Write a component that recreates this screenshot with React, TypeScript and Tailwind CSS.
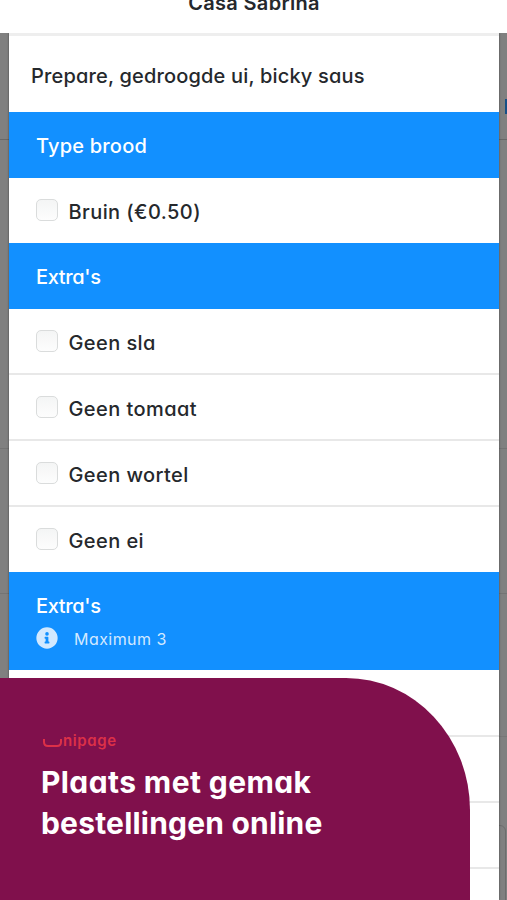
import type { ReactNode } from "react";

const SOFT = "[font-family:Inter,Lato,sans-serif] [font-feature-settings:'cv11']";

function SectionHeader({
  title,
  tracking,
  children,
}: {
  title: string;
  tracking: string;
  children?: ReactNode;
}) {
  return (
    <div className={`relative shrink-0 bg-[#1290ff] pl-[27px] text-white ${children ? "h-[98px]" : "h-[66px]"}`}>
      <div className={`flex h-[68px] items-center text-[20px] font-medium ${tracking}`}>{title}</div>
      {children}
    </div>
  );
}

function Option({ label, line = false }: { label: string; line?: boolean }) {
  return (
    <div className={`flex h-[66px] shrink-0 items-center border-b-2 pl-[27px] ${line ? "border-[#e8e8e8]" : "border-transparent"}`}>
      <span className="mr-[10.5px] size-[22px] rounded-[5px] border-[1.5px] border-[#dadcdc] bg-linear-to-b from-[#f4f5f5] to-[#fdfdfd]" />
      <span className="pt-[3px] text-[20px] font-medium tracking-[0.42px] text-[#25282c]">{label}</span>
    </div>
  );
}

export default function App() {
  return (
    <div className={`relative flex h-[900px] w-[507px] flex-col overflow-hidden bg-[#808080] ${SOFT}`}>
      <div className="absolute top-[139px] left-0 h-px w-full bg-[#686868]" />
      <div className="absolute top-[448px] left-0 h-px w-full bg-[#747474]" />
      <div className="absolute top-[593px] left-0 h-px w-full bg-[#747474]" />
      <div className="absolute top-[736px] left-0 h-px w-full bg-[#777777]" />
      <div className="absolute top-[825px] left-[400px] h-[90px] w-[106px] rounded-[6px] border border-[#6d6d6d]" />
      <div className="absolute top-[99px] left-[505px] h-[15px] w-[4px] bg-[#174f86]" />

      <header className="relative z-10 flex h-[33px] shrink-0 justify-center bg-white">
        <span className="-mt-[9px] ml-[1px] text-[20px] leading-6 font-semibold tracking-[0.32px] text-[#25282c] [font-feature-settings:normal]">
          Casa Sabrina
        </span>
      </header>

      <main className="relative mr-[8px] ml-[9px] flex flex-1 flex-col overflow-hidden bg-white shadow-[0_0_2px_rgba(0,0,0,0.5)]">
        <div className="h-[79px] shrink-0 border-t-[3px] border-[#eeeeee] pt-[26px] pl-[22px] text-[20px] leading-7 font-[450] tracking-[0.17px] text-[#25282c]">
          Prepare, gedroogde ui, bicky saus
        </div>
        <SectionHeader title="Type brood" tracking="tracking-[0.2px]" />
        <div className="-mb-[1px] shrink-0">
          <Option label="Bruin (€0.50)" />
        </div>
        <SectionHeader title="Extra's" tracking="tracking-[-0.35px]" />
        <Option label="Geen sla" line />
        <Option label="Geen tomaat" line />
        <Option label="Geen wortel" line />
        <div className="-mb-[1px] shrink-0">
          <Option label="Geen ei" />
        </div>
        <SectionHeader title="Extra's" tracking="tracking-[-0.35px]">
          <div className="-mt-[14px] flex items-center text-[#d2e9ff]">
            <svg viewBox="0 0 512 512" className="size-[22px]" fill="currentColor">
              <path d="M256 8a248 248 0 1 0 0 496 248 248 0 0 0 0-496zm0 110a42 42 0 1 1 0 84 42 42 0 0 1 0-84zm56 254c0 7-5 12-12 12h-88c-7 0-12-5-12-12v-24c0-7 5-12 12-12h12v-64h-12c-7 0-12-5-12-12v-24c0-7 5-12 12-12h64c7 0 12 5 12 12v100h12c7 0 12 5 12 12z" />
            </svg>
            <span className="pt-[3px] pl-[16px] text-[16px] leading-5 tracking-[0.45px]">Maximum 3</span>
          </div>
        </SectionHeader>
        <div className="h-[67px] shrink-0 border-b-2 border-[#e8e8e8]" />
        <div className="h-[66px] shrink-0 border-b-2 border-[#e8e8e8]" />
        <div className="h-[66px] shrink-0 border-b-2 border-[#e8e8e8]" />
      </main>

      <section className="absolute top-[678px] left-0 z-10 h-[222px] w-[470px] rounded-tr-[124px_132px] bg-[#80104c] pl-[41px]">
        <div className="mt-[52px] flex h-[22px] items-center text-[#dc3048]">
          <svg viewBox="0 0 19 8" className="mt-[3px] ml-[2px] h-[8px] w-[19px]" fill="none" stroke="currentColor" strokeWidth="2">
            <path d="M1 0v3q0 4 4 4h9q4 0 4-4V0" />
          </svg>
          <span className="ml-[1px] text-[15px] font-semibold tracking-[0.6px]">nipage</span>
        </div>
        <h1 className="mt-[10px] text-[30px] leading-[41px] font-bold whitespace-nowrap text-white">
          <span className="block tracking-[0.4px]">Plaats met gemak</span>
          <span className="block tracking-[0.2px]">bestellingen online</span>
        </h1>
      </section>
    </div>
  );
}
